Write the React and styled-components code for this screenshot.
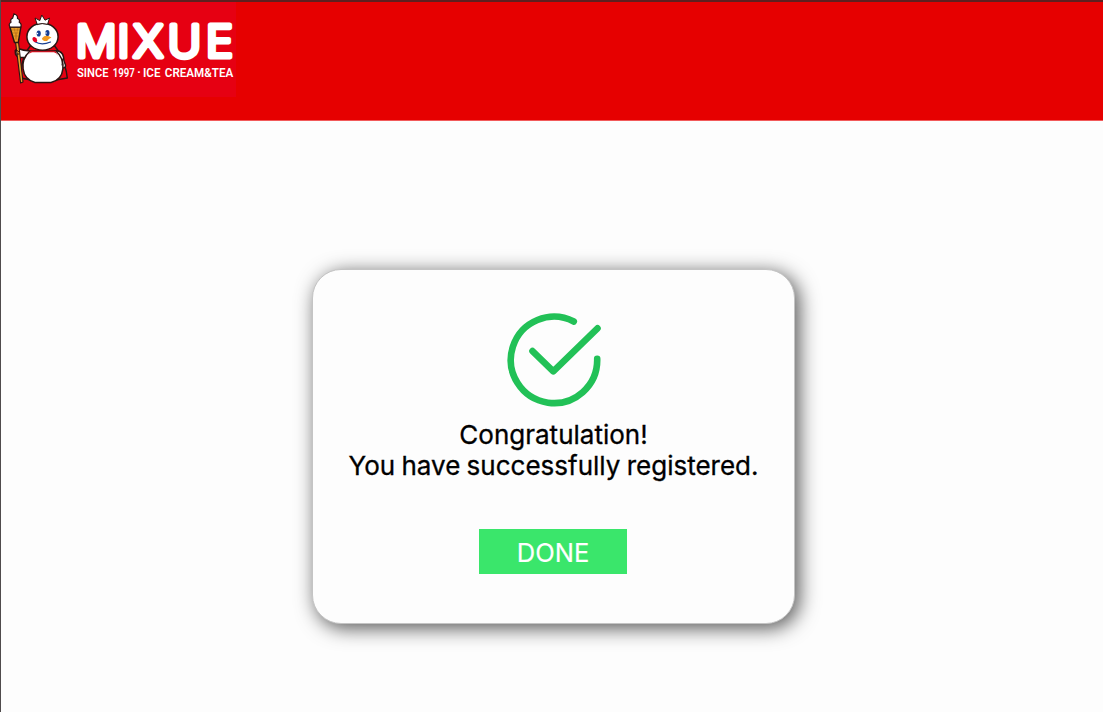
import React from "react";
import styled, { createGlobalStyle } from "styled-components";

const GlobalStyle = createGlobalStyle`
  *, *::before, *::after { box-sizing: border-box; }
  body { margin: 0; background: #fdfdfd; font-family: Inter, sans-serif; }
`;

const Page = styled.div`
  display: flex;
  flex-direction: column;
  height: 100vh;
  min-height: 712px;
  overflow: hidden;
  background: #fdfdfd;
  border-left: 1px solid #4f4b4c;
`;

const Header = styled.header`
  flex: none;
  height: 121px;
  background: #e60000;
  border-top: 2px solid #5e2020;
  border-bottom: 1px solid #f25a5a;
`;

const Brand = styled.div`
  display: flex;
  width: 235px;
  height: 95px;
  background: #e60012;
`;

const Mascot = styled.svg`
  flex: none;
  width: 72px;
  height: 95px;
`;

const Wordmark = styled.svg`
  flex: none;
  width: 163px;
  height: 95px;
  fill: #fff;
  overflow: visible;
`;

const BrandName = styled.text`
  font: 300 44px Inter, sans-serif;
  stroke: #fff;
  stroke-width: 4.8px;
  stroke-linejoin: round;
  text-anchor: middle;
`;

const Tagline = styled.text`
  font: 600 12.8px Roboto, sans-serif;
`;

const Main = styled.main`
  flex: 1;
  display: flex;
  justify-content: center;
  align-items: flex-start;
  padding: 148px 0 0 3px;
`;

const Card = styled.section`
  display: flex;
  flex-direction: column;
  align-items: center;
  width: 483px;
  height: 355px;
  padding-top: 42px;
  border-radius: 29px;
  border: 1px solid #c4c4c4;
  background: #fdfdfd;
  box-shadow: 4px 4px 20px 0 rgba(0, 0, 0, 0.68);
`;

const SuccessIcon = styled.svg`
  width: 96px;
  height: 96px;
  fill: none;
  stroke: #22c157;
  stroke-width: 6.6px;
  stroke-linecap: round;
  stroke-linejoin: round;
`;

const Message = styled.p`
  margin: 11px 0 0;
  color: #000;
  font-size: 26px;
  font-weight: 400;
  line-height: 31px;
  word-spacing: -1px;
  -webkit-text-stroke: 0.3px #000;
  text-align: center;
  white-space: nowrap;
`;

const DoneButton = styled.button`
  width: 148px;
  height: 45px;
  margin: 48px 1px 0 0;
  padding: 2px 0 0;
  border: 0;
  background: #3ae66b;
  color: #fff;
  font: 400 25.5px Inter, sans-serif;
  -webkit-text-stroke: 0.2px #fff;
`;

const taglineWords = [
  { text: "SINCE", x: 77, width: 31.5 },
  { text: "1997", x: 112.8, width: 22 },
  { text: "·", x: 137, width: 4 },
  { text: "ICE", x: 143, width: 17.5 },
  { text: "CREAM&TEA", x: 164.8, width: 68.5 },
];

function MascotArt() {
  return (
    <Mascot viewBox="1 2 72 95" aria-hidden="true">
      <g stroke="#2b1512" strokeWidth="1.5" strokeLinejoin="round" strokeLinecap="round">
        <path d="M31 45L26 52Q20.5 64 21 78L31 80M54 45L59 52Q66 65 67.3 78L56 80" fill="#e60012" />
        <path d="M30 51Q23 50.5 18 48.5Q14.5 49.5 15.5 54Q17 57.5 20 57.5L27 57.5M55 51Q62 50 63.5 57Q63.5 61 65.5 65Q66 68 62 68L58 60" fill="#fff" />
        <path d="M30 51C19 61 21 79 35 82.5H51C66 79 66 60 56 51Z" fill="#fff" />
        <path d="M31 51.2H55.5L58 56Q56 52.5 54 52.2H32Q29 53.5 28 55Z" fill="#e60012" stroke="none" />
        <ellipse cx="42.5" cy="36.7" rx="15.6" ry="13.5" fill="#fff" />
        <path d="M37.2 24.3L35 18L39.8 20.6L41.8 15L45 20.2L49.5 18L47.6 24.3Q42 22.8 37.2 24.3Z" fill="#fff" strokeWidth="1" />
        <path d="M15.4 41H18.4L23 82L20.6 83Z" fill="#e9a02c" strokeWidth="1.1" />
        <path d="M9.9 27H20.8L18.3 42.5H14.5Z" fill="#efa126" />
        <path d="M10 27Q8 24 11 22.2Q10 19 12.7 18.2L14 13.7Q18 15 17.5 18.5Q20.3 19.5 19.2 22.3Q22 24 20.8 27Z" fill="#fff" strokeWidth="1.2" />
        <path d="M15 50.5Q18 49.5 19 52M16 54H19" fill="none" strokeWidth="1" />
        <path d="M62.7 59L62 65" fill="none" strokeWidth="1" />
      </g>
      <path d="M12 30H19M12.5 33H18.5M13.5 36H18M14 28L17 40M18 28L15 40" stroke="#9f5a16" strokeWidth=".45" />
      <path d="M35 41.8Q41.5 45.8 50.5 42" fill="none" stroke="#173d8f" strokeWidth="1.2" strokeLinecap="round" />
      <ellipse cx="38.7" cy="33.5" rx="2.1" ry="3.1" fill="#143e96" />
      <ellipse cx="47.4" cy="33" rx="2.1" ry="3.1" fill="#143e96" />
      <circle cx="37.4" cy="33.5" r=".8" fill="#fff" />
      <circle cx="46" cy="33" r=".8" fill="#fff" />
      <path d="M42 38.2Q45.5 33.8 51.5 37.4Q48.5 38.5 47 41Q42 41.3 42 38.2Z" fill="#f29b21" />
      <path d="M32.5 38Q34 35.7 36.3 38.3Q38.3 41.5 36 42.3Q32 42 32.5 38Z" fill="#e60024" />
    </Mascot>
  );
}

export default function App() {
  return (
    <>
      <GlobalStyle />
      <Page>
        <Header>
          <Brand>
            <MascotArt />
            <Wordmark viewBox="73 2 163 95">
              <BrandName transform="translate(77 0) scale(1.03 1)" x="18.6 45.1 69.2 104.4 138.3" y="57.5">
                MIXUE
              </BrandName>
              {taglineWords.map(({ text, x, width }) => (
                <Tagline key={text} x={x} y="76.8" textLength={width} lengthAdjust="spacingAndGlyphs">
                  {text}
                </Tagline>
              ))}
            </Wordmark>
          </Brand>
        </Header>
        <Main>
          <Card>
            <SuccessIcon viewBox="505.5 311.7 96 96" aria-hidden="true">
              <path d="M573.3 321.2A43.2 43.2 0 1 0 596.7 358.5" />
              <path d="M532 350.8L552.8 371L597 328" />
            </SuccessIcon>
            <Message>
              Congratulation!
              <br />
              You have successfully registered.
            </Message>
            <DoneButton type="button">DONE</DoneButton>
          </Card>
        </Main>
      </Page>
    </>
  );
}
